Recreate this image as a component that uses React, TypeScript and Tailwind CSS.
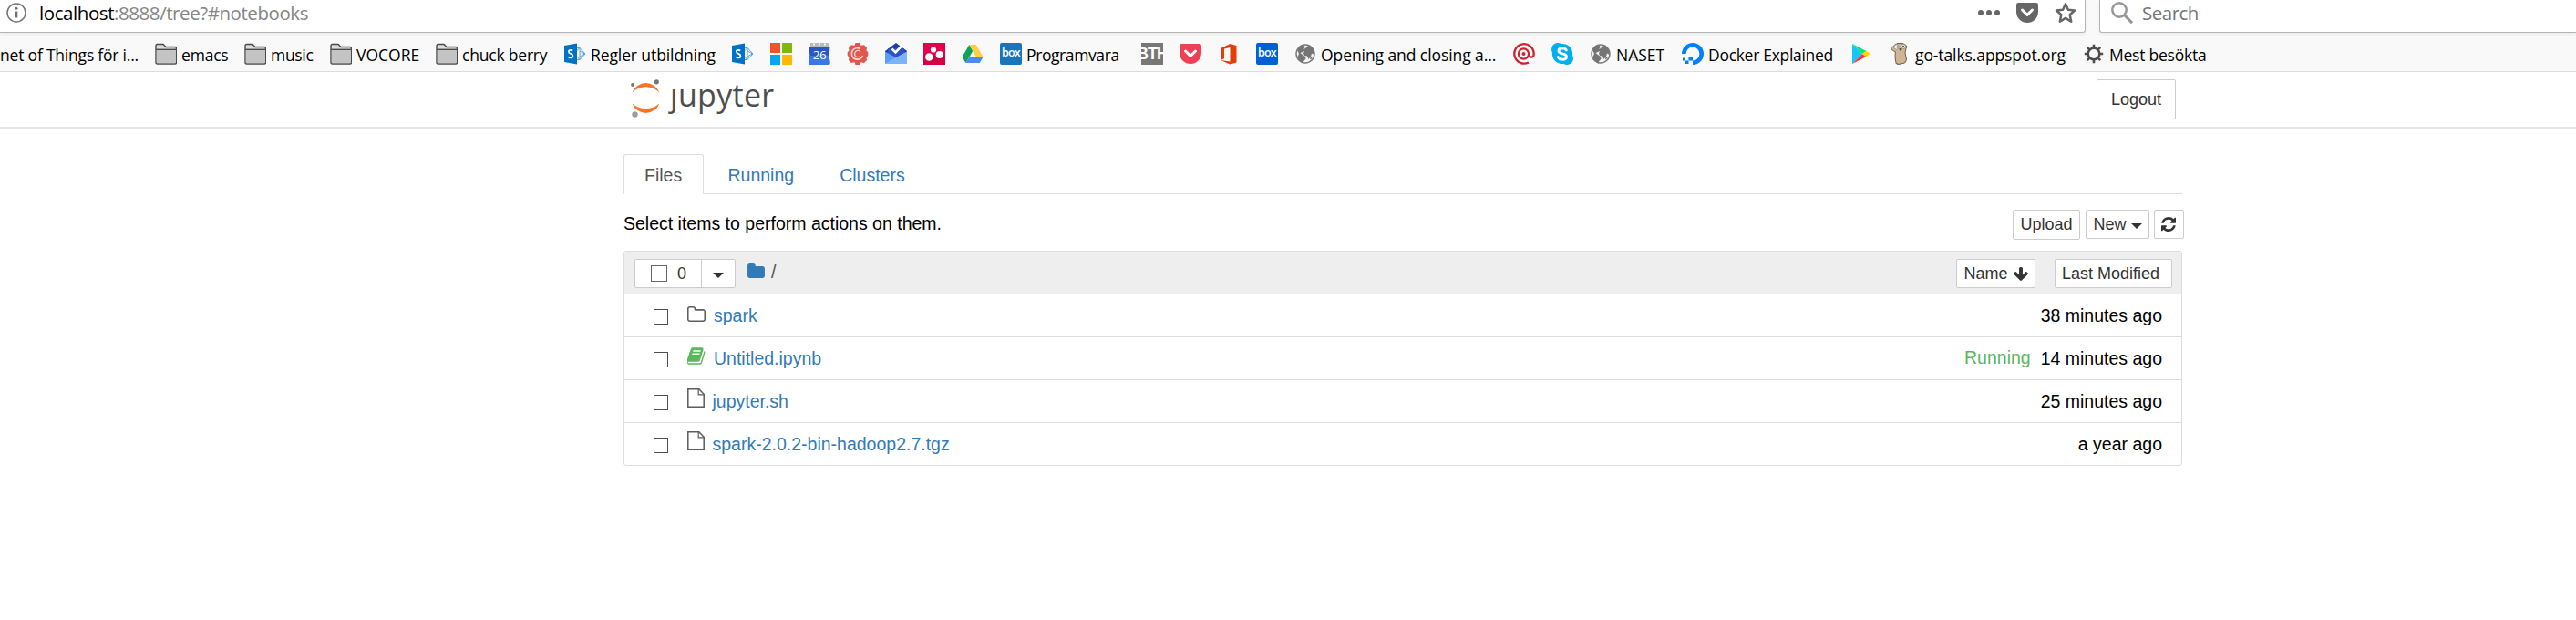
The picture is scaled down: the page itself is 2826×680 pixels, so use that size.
import type { ReactNode } from "react";

const FolderMark = () => (
  <svg viewBox="0 0 24 24" className="size-6">
    <path d="M1 22V3q0-1.500 1.500-1.500H9l3 3h10Q23.500 4.500 23.500 6v15.500q0 1.500-1.500 1.500H2.500Q1 23 1 21.500Z" fill="#dcdcdc" stroke="#4a4a4a" strokeWidth="1.400" />
    <path d="M1.800 8h21v13.500q0 .8-.8.8H2.600q-.8 0-.8-.8Z" fill="#c4c4c4" />
    <path d="M1 7.300h22.500" stroke="#4a4a4a" strokeWidth="1.400" />
  </svg>
);

const SharepointMark = () => (
  <svg viewBox="0 0 24 24" className="size-6">
    <path d="M13 5.500h4l6 6.500-6 6.500h-4M13 9.500l4-4v13l-4-4M17 9l5.500 3L17 15" fill="none" stroke="#5aa5dd" strokeWidth="1" />
    <path d="M0 3L14 .5v23L0 21Z" fill="#0072c6" />
    <path d="M9.200 8.600Q8 7.800 6.800 7.900q-1.900.1-1.900 1.800 0 1.400 2.200 2.100 2.300.8 2.300 2.400 0 2-2.300 2.100-1.400.1-2.600-.7" fill="none" stroke="#fff" strokeWidth="1.800" />
  </svg>
);

const MicrosoftMark = () => (
  <svg viewBox="0 0 24 24" className="size-6">
    <path d="M0 0h11v11H0z" fill="#f35325" />
    <path d="M13 0h11v11H13z" fill="#7fba00" />
    <path d="M0 13h11v11H0z" fill="#05a6f0" />
    <path d="M13 13h11v11H13z" fill="#ffb900" />
  </svg>
);

const CalendarMark = () => (
  <div className="relative size-6">
    <svg viewBox="0 0 24 24" className="size-6">
      <path d="M2 0h20v5H2z" fill="#b9b9b9" />
      <path d="M5 1.500h2M11 1.500h2M17 1.500h2" stroke="#f4f4f4" strokeWidth="1.800" />
      <path d="M.5 4h23l-.8 10 .8 8q0 2-1.500 2H2Q.5 24 .5 22l.8-8Z" fill="#2a56c6" />
      <path d="M1.300 14h21.400l.8 8q0 2-1.500 2H2Q.5 24 .5 22Z" fill="#3b78e7" />
    </svg>
    <span className="absolute inset-x-0 top-[5px] text-center font-['Open_Sans',sans-serif] text-[13.5px] leading-[17px] tracking-[-0.5px] text-white">26</span>
  </div>
);

const CogMark = () => (
  <svg viewBox="0 0 24 24" className="size-6">
    <path d="M9.500 0h5l1 2.800 3.500-.6 3 3-.5 3.500L23.300 10v4l-1.800 1.400.5 3.500-3 3-3.500-.6-1 2.700h-5l-1-2.700-3.500.6-3-3 .5-3.500L.7 14v-4l1.800-1.300L2 5.200l3-3 3.500.6Z" fill="#e2574c" />
    <path d="M15 6.600A6.300 6.300 0 1 0 17.500 14" fill="none" stroke="#f7d4d0" strokeWidth="1.700" />
    <path d="M15 9.800A3.600 3.600 0 1 0 14.500 14.800" fill="none" stroke="#f7d4d0" strokeWidth="1.200" />
  </svg>
);

const InboxMark = () => (
  <svg viewBox="0 0 24 24" className="size-6">
    <path d="M0 9L12 0l12 9v5H0Z" fill="#1f3fa8" />
    <path d="M3 6h18v10H3Z" fill="#2b50c8" />
    <path d="M7.500 6.500l4 4 7-7.500" fill="none" stroke="#fff" strokeWidth="2.600" />
    <path d="M0 9.500l12 6.500 12-6.500V22q0 1-1 1H1q-1 0-1-1Z" fill="#5a9cf8" />
    <path d="M0 22.500L24 9.500V22q0 1-1 1H1Z" fill="#7cb4fb" />
  </svg>
);

const DotsMark = () => (
  <svg viewBox="0 0 24 24" className="size-6">
    <path d="M0 0h24v24H0z" fill="#e5004f" />
    <path d="M0 14h24v10H0z" fill="#c4003f" fillOpacity=".6" />
    <g fill="#fff">
      <circle cx="11" cy="7.500" r="3.100" />
      <circle cx="6.300" cy="15.500" r="4.300" />
      <circle cx="17.700" cy="13" r="4" />
    </g>
  </svg>
);

const DriveMark = () => (
  <svg viewBox="0 0 24 24" className="size-6">
    <path d="M8.300 2L.5 15.500l4 6.500 8-13.500Z" fill="#11a15e" />
    <path d="M8.300 2h7.600l7.700 13.500h-7.900Z" fill="#ffcf48" />
    <path d="M8.300 15.500h15.300l-3.800 6.500H4.500Z" fill="#4f88ef" />
  </svg>
);

const BoxMark = ({ className }: { className: string }) => (
  <div className={`flex size-6 items-center justify-center rounded-[2px] pb-px font-['Open_Sans',sans-serif] text-[12.5px] leading-none font-semibold tracking-[-0.8px] text-white ${className}`}>
    <span>box</span>
  </div>
);

const BthMark = () => (
  <div className="flex size-6 items-center justify-center overflow-hidden bg-[#777]">
    <span className="font-['Liberation_Sans',sans-serif] text-[18px] leading-6 font-bold tracking-[-1px] text-white">BTH</span>
  </div>
);

const PocketShape = ({ fill, className }: { fill: string; className: string }) => (
  <svg viewBox="0 0 24 22" className={className}>
    <path d="M2.200 0h19.600Q24 0 24 2.200V10a12 12 0 0 1-24 0V2.200Q0 0 2.200 0Z" fill={fill} />
    <path d="M6.500 8l5.500 5.300L17.500 8" fill="none" stroke="#fff" strokeWidth="3" strokeLinecap="round" strokeLinejoin="round" />
  </svg>
);

const OfficeMark = () => (
  <svg viewBox="0 0 24 24" className="size-6">
    <path d="M3 6l10.500-5L20.500 3v18.500l-7 2L3 19l10.500 1.500V5L7 6.600v10.600L3 19Z" fill="#e43d05" />
  </svg>
);

const GlobeMark = () => (
  <svg viewBox="0 0 24 24" className="size-6">
    <circle cx="12" cy="12" r="10" fill="#f4f4f4" stroke="#757575" strokeWidth="1.400" />
    <path d="M3 8q3-5 7-5.500l2 2-2 2.500 2-1 3-3q4 1 6 5l.5 5-2.500-1.500-1 3.500-2.500 3-1.500-3.500-3-.5-1-2.500 1-2.500-2 1-2.500 1 2.500 2 3 2 .5 2.500-2.500 3v2.500Q4 20 3.500 15L5 12Z" fill="#757575" />
    <path d="M18 15l2 .5-2 3-1-1Z" fill="#757575" />
  </svg>
);

const AtMark = () => (
  <svg viewBox="0 0 24 24" className="size-6" fill="none" stroke="#cf2030">
    <circle cx="11.500" cy="12" r="2" fill="#cf2030" stroke="none" />
    <circle cx="11.500" cy="12" r="5.600" strokeWidth="2.200" />
    <path d="M17 12q0 3.700 3 3.700 2.700 0 2.700-3.700A10.700 10.700 0 1 0 17 21.400" strokeWidth="2.300" />
  </svg>
);

const SkypeMark = () => (
  <svg viewBox="0 0 24 24" className="size-6">
    <path d="M7 0q2 0 3.500 1A11 11 0 0 1 23 13.500Q24 15 24 17a7 7 0 0 1-10.500 6A11 11 0 0 1 1 10.500Q0 9 0 7a7 7 0 0 1 7-7Z" fill="#00aff0" />
    <path d="M16.300 8Q15 5.800 12 5.800q-4 .2-4 3 0 2.200 4 3 4.500.8 4.500 3.400 0 3-4.500 3-3.500 0-4.700-2.600" fill="none" stroke="#fff" strokeWidth="2.900" strokeLinecap="round" />
  </svg>
);

const OceanMark = () => (
  <svg viewBox="0 0 24 24" className="size-6">
    <path d="M12 21.700a9.700 9.700 0 1 0-9.700-9.700" fill="none" stroke="#0080ff" strokeWidth="4.600" />
    <path d="M7.500 15H12v4.500H7.500zM4 19.500h3.500V23H4zM1 16.500h3v3H1z" fill="#0080ff" />
  </svg>
);

const PlayMark = () => (
  <svg viewBox="0 0 24 24" className="size-6">
    <path d="M2 1v22l11-11Z" fill="#12c8f5" />
    <path d="M2 1l15.500 8L13 12Z" fill="#10e07a" />
    <path d="M2 23l15.500-8L13 12Z" fill="#fb3348" />
    <path d="M13 12l4-3.500 5 3.500-5 3.500Z" fill="#ffd400" />
  </svg>
);

const GopherMark = () => (
  <svg viewBox="0 0 24 24" className="size-6">
    <path d="M5 4Q8 0 12 .5q5-.5 7 2.500 1.500 1 0 3l-1 5 1.500 7q-1 5-5 4.500-4 2-6.500-.5-1.500-7-.5-12Q3 8 2.500 5.500 3 4 5 4Z" fill="#d0b594" stroke="#77695a" strokeWidth="1.100" />
    <circle cx="8.500" cy="4.500" r="2.700" fill="#f2f2f2" stroke="#8b8278" strokeWidth=".8" />
    <circle cx="16" cy="3.800" r="2.500" fill="#f2f2f2" stroke="#8b8278" strokeWidth=".8" />
    <circle cx="9.500" cy="4.500" r=".9" fill="#333" />
    <circle cx="16" cy="3.600" r=".9" fill="#333" />
    <path d="M11.500 6h3l-.5 2.500h-2Z" fill="#5b5048" />
  </svg>
);

const GearMark = () => (
  <svg viewBox="0 0 24 24" className="size-6" stroke="#4c4c4c" fill="none">
    <circle cx="12" cy="12" r="6.300" strokeWidth="2.600" />
    <path d="M12 1.800v4M12 18.200v4M1.800 12h4M18.200 12h4M4.800 4.800l2.800 2.800M16.400 16.400l2.800 2.800M4.800 19.200l2.800-2.800M16.400 7.600l2.800-2.800" strokeWidth="2.600" />
  </svg>
);

type Bookmark = { icon: ReactNode; label?: string; width: string; tracking?: string };

const bookmarks: Bookmark[] = [
  { icon: <FolderMark />, label: "emacs", width: "w-[98px]", tracking: "tracking-[-0.2px]" },
  { icon: <FolderMark />, label: "music", width: "w-[94px]", tracking: "tracking-[-0.3px]" },
  { icon: <FolderMark />, label: "VOCORE", width: "w-[116px]" },
  { icon: <FolderMark />, label: "chuck berry", width: "w-[141px]", tracking: "tracking-[-0.2px]" },
  { icon: <SharepointMark />, label: "Regler utbildning", width: "w-[184px]", tracking: "tracking-[-0.1px]" },
  { icon: <SharepointMark />, width: "w-[42px]" },
  { icon: <MicrosoftMark />, width: "w-[42px]" },
  { icon: <CalendarMark />, width: "w-[42px]" },
  { icon: <CogMark />, width: "w-[42px]" },
  { icon: <InboxMark />, width: "w-[42px]" },
  { icon: <DotsMark />, width: "w-[42px]" },
  { icon: <DriveMark />, width: "w-[42px]" },
  { icon: <BoxMark className="bg-[#1a74ba]" />, label: "Programvara", width: "w-[155px]", tracking: "tracking-[-0.4px]" },
  { icon: <BthMark />, width: "w-[42px]" },
  { icon: <PocketShape fill="#ee4056" className="h-[22px] w-6" />, width: "w-[42px]" },
  { icon: <OfficeMark />, width: "w-[42px]" },
  { icon: <BoxMark className="bg-[#0061d5]" />, width: "w-[42px]" },
  { icon: <GlobeMark />, label: "Opening and closing a...", width: "w-[240px]", tracking: "tracking-[-0.08px]" },
  { icon: <AtMark />, width: "w-[42px]" },
  { icon: <SkypeMark />, width: "w-[42px]" },
  { icon: <GlobeMark />, label: "NASET", width: "w-[101px]" },
  { icon: <OceanMark />, label: "Docker Explained", width: "w-[185px]", tracking: "tracking-[-0.3px]" },
  { icon: <PlayMark />, width: "w-[42px]" },
  { icon: <GopherMark />, label: "go-talks.appspot.org", width: "w-[213px]", tracking: "tracking-[-0.1px]" },
  { icon: <GearMark />, label: "Mest besökta", width: "w-[150px]", tracking: "tracking-[-0.23px]" },
];

function BrowserChrome() {
  return (
    <header className="h-[79px] border-b border-[#dcdcdc] bg-[#f9f9f9] font-['Open_Sans',sans-serif]">
      <div className="flex h-9 gap-[15px]">
        <div className="flex w-[2288px] items-start rounded-br-[3px] border-r border-b border-[#b5b5b5] bg-white shadow-[0_2px_4px_rgba(0,0,0,0.06)]">
          <svg viewBox="0 0 22 22" className="mt-[3px] ml-[7px] size-[22px]">
            <circle cx="11" cy="11" r="10" fill="none" stroke="#737373" strokeWidth="1.500" />
            <path d="M11 9.500v7" stroke="#737373" strokeWidth="2.600" />
            <circle cx="11" cy="6.200" r="1.500" fill="#737373" />
          </svg>
          <span className="ml-[14px] grow text-[20.5px] leading-[29px] tracking-[-0.43px] whitespace-nowrap text-[#858585]">
            <span className="text-black">localhost</span>:8888/tree?#notebooks
          </span>
          <svg viewBox="0 0 24 6" className="mt-[11px] mr-[18px] h-[6px] w-6" fill="#666">
            <circle cx="3" cy="3" r="3" />
            <circle cx="12" cy="3" r="3" />
            <circle cx="21" cy="3" r="3" />
          </svg>
          <PocketShape fill="#666" className="mt-[3px] mr-[18px] h-[22px] w-6" />
          <svg viewBox="0 0 24 24" className="mt-[2px] mr-[9px] size-6">
            <path d="M12 2.200l2.900 6.500 7.100.8-5.300 4.800 1.500 7.400L12 17.900l-6.200 3.800 1.500-7.400L2 9.500l7.100-.8Z" fill="none" stroke="#666" strokeWidth="2.500" strokeLinejoin="round" />
          </svg>
        </div>
        <div className="flex grow items-start rounded-bl-[3px] border-b border-l border-[#b5b5b5] bg-white shadow-[0_2px_4px_rgba(0,0,0,0.06)]">
          <svg viewBox="0 0 24 24" className="mt-[2px] ml-[12px] size-6" fill="none" stroke="#979797">
            <circle cx="9" cy="9" r="7.700" strokeWidth="2.500" />
            <path d="M14.500 14.500l8.500 8.700" strokeWidth="3" />
          </svg>
          <span className="ml-[10px] text-[20.5px] leading-[29px] tracking-[-0.5px] text-[#757575]">Search</span>
        </div>
      </div>
      <nav className="flex h-[42px] items-start overflow-hidden pt-[11px] text-[17.5px] leading-[26px] whitespace-nowrap text-black">
        <div className="flex w-[170px] shrink-0 justify-end pr-[18px] tracking-[-0.21px]">
          <span>net of Things för i...</span>
        </div>
        {bookmarks.map((b, i) => (
          <div key={i} className={`flex shrink-0 gap-[5px] ${b.width}`}>
            <div className="flex size-6 shrink-0 items-center justify-center">{b.icon}</div>
            {b.label && <span className={b.tracking}>{b.label}</span>}
          </div>
        ))}
      </nav>
    </header>
  );
}

function JupyterLogo() {
  return (
    <div className="flex items-start">
      <svg viewBox="0 0 32 43" className="h-[43px] w-8">
        <path d="M1.500 14.500a16 16 0 0 1 30 0Q25 8.300 16.500 8.300T1.500 14.500Z" fill="#f37726" />
        <path d="M1.500 26.500a16 16 0 0 0 30 0Q25 32 16.500 32T1.500 26.500Z" fill="#f37726" />
        <circle cx="28.300" cy="2.800" r="2.600" fill="#767677" />
        <circle cx="2" cy="6" r="1.900" fill="#767677" />
        <circle cx="4.500" cy="38.500" r="3.200" fill="#9e9e9e" />
      </svg>
      <span className="ml-[11px] pt-[2px] font-['Open_Sans',sans-serif] text-[34px] leading-[30px] tracking-[0.3px] text-[#4e4e4e]">
        <span className="inline-block [clip-path:inset(8px_0_-12px_-12px)]">j</span>upyter
      </span>
    </div>
  );
}

const Caret = () => (
  <svg viewBox="0 0 12 6" className="h-[6px] w-3" fill="#333">
    <path d="M0 0h12L6 6Z" />
  </svg>
);

const ClosedFolder = () => (
  <svg viewBox="64 128 1664 1408" className="h-4 w-[19px]" fill="#337ab7">
    <path d="M1728 608v704q0 92-66 158t-158 66h-1216q-92 0-158-66t-66-158v-960q0-92 66-158t158-66h320q92 0 158 66t66 158v32h672q92 0 158 66t66 158z" />
  </svg>
);

const OpenFolder = () => (
  <svg viewBox="64 128 1664 1408" className="mt-[13px] h-[17px] w-5" fill="#5e5e5e">
    <path d="M1600 1312v-704q0-40-28-68t-68-28h-704q-40 0-68-28t-28-68v-64q0-40-28-68t-68-28h-320q-40 0-68 28t-28 68v960q0 40 28 68t68 28h1216q40 0 68-28t28-68zm128-704v704q0 92-66 158t-158 66h-1216q-92 0-158-66t-66-158v-960q0-92 66-158t158-66h320q92 0 158 66t66 158v32h672q92 0 158 66t66 158z" />
  </svg>
);

const Notebook = () => (
  <svg viewBox="64 128 1640 1536" className="mt-[11px] h-[19px] w-5" fill="#5cb85c">
    <path d="M1639 478q40 57 18 129l-275 906q-19 64-76.500 107.500t-122.500 43.500h-923q-77 0-148.500-53.500t-99.500-131.500q-24-67-2-127 0-4 3-27t4-37q1-8-3-21.500t-3-19.500q2-11 8-21t16.500-23.500 16.500-23.500q23-38 45-91.500t30-91.500q3-10 .5-30t-.5-28q3-11 17-28t17-23q21-36 42-92t25-90q1-9-2.500-32t.5-28q4-13 22-30.500t22-22.500q19-26 42.500-84.500t27.500-96.500q1-8-3-25.500t-2-26.500q2-8 9-18t18-23 17-21q8-12 16.500-30.500t15-35 16-36 19.500-32 26.500-23.500 36-11.500 47.500 5.500l-1 3q38-9 51-9h761q74 0 114 56t18 130l-274 906q-36 119-71.500 153.500t-128.500 34.500h-869q-27 0-38 15-11 16-1 43 24 70 144 70h923q29 0 56-15.500t35-41.500l300-987q7-22 5-57 38 15 59 43zm-1064 2q-4 13 2 22.500t20 9.500h608q13 0 25.500-9.500t16.500-22.500l21-64q4-13-2-22.500t-20-9.500h-608q-13 0-25.500 9.500t-16.500 22.500zm-83 256q-4 13 2 22.500t20 9.500h608q13 0 25.500-9.500t16.500-22.500l21-64q4-13-2-22.500t-20-9.500h-608q-13 0-25.500 9.500t-16.500 22.500z" />
  </svg>
);

const PlainFile = () => (
  <svg viewBox="0 0 19 21" className="mt-[9px] mr-[1px] h-[21px] w-[19px]" fill="none" stroke="#5e5e5e" strokeWidth="1.500">
    <path d="M.8.8h12l5.400 5.400v14H.8Z" />
    <path d="M12.200.8v6h6" strokeWidth="1.200" />
  </svg>
);

const Refresh = () => (
  <svg viewBox="128 128 1536 1536" className="mr-px size-4" fill="#333">
    <path d="M1639 1056q0 5-1 7-64 268-268 434.500t-478 166.500q-146 0-282.500-55t-243.500-157l-129 129q-19 19-45 19t-45-19-19-45v-448q0-26 19-45t45-19h448q26 0 45 19t19 45-19 45l-137 137q71 66 161 102t187 36q134 0 250-65t186-179q11-17 53-117 8-23 30-23h192q13 0 22.500 9.500t9.500 22.500zm25-800v448q0 26-19 45t-45 19h-448q-26 0-45-19t-19-45 19-45l138-138q-148-137-349-137-134 0-250 65t-186 179q-11 17-53 117-8 23-30 23h-199q-13 0-22.500-9.500t-9.500-22.500v-7q65-268 270-434.500t480-166.500q146 0 284 55.500t245 156.500l130-129q19-19 45-19t45 19 19 45z" />
  </svg>
);

const ArrowDown = () => (
  <svg viewBox="117 128 1558 1484" className="h-[15px] w-[16px]" fill="#333">
    <path d="M1675 832q0 53-37 90l-651 652q-39 37-91 37-53 0-90-37l-651-652q-38-36-38-90 0-53 38-91l74-75q39-37 91-37 53 0 90 37l294 294v-704q0-52 38-90t90-38h128q52 0 90 38t38 90v704l294-294q37-37 90-37 52 0 91 37l75 75q37 39 37 91z" />
  </svg>
);

const files = [
  { icon: <OpenFolder />, name: "spark", gap: "ml-[9px]", time: "38 minutes ago", running: false },
  { icon: <Notebook />, name: "Untitled.ipynb", gap: "ml-[9px]", time: "14 minutes ago", running: true },
  { icon: <PlainFile />, name: "jupyter.sh", gap: "ml-[7.5px]", time: "25 minutes ago", running: false },
  { icon: <PlainFile />, name: "spark-2.0.2-bin-hadoop2.7.tgz", gap: "ml-[7.5px]", time: "a year ago", running: false },
];

export default function App() {
  return (
    <div className="h-[680px] w-[2826px] overflow-hidden bg-white font-['Liberation_Sans',Arial,sans-serif] text-[19.5px] text-black">
      <BrowserChrome />
      <div className="h-[62px] border-b-2 border-[#e7e7e7]">
        <div className="ml-[692px] flex w-[1695px] items-start justify-between pt-[8px]">
          <JupyterLogo />
          <button className="h-11 w-[87px] rounded-[2px] border border-[#ccc] bg-white text-[18px] text-[#333]">Logout</button>
        </div>
      </div>

      <main className="ml-[684px] w-[1710px] pt-[28px]">
        <div className="flex h-11 border-b border-[#ddd] leading-[45px] text-[#337ab7]">
          <div className="h-11 w-[88px] rounded-t-[3px] border border-b-0 border-[#ddd] bg-white pl-[22px] text-[#555]">Files</div>
          <div className="ml-[26.5px] pt-px">Running</div>
          <div className="ml-[50px] pt-px">Clusters</div>
        </div>

        <div className="flex h-[62px] items-start justify-between">
          <p className="mt-[17px] leading-[30px]">Select items to perform actions on them.</p>
          <div className="mt-[17px] mr-[-2px] flex text-[18px] text-[#333]">
            <button className="h-[33px] w-[74px] rounded-[2px] border border-[#ccc] bg-white">Upload</button>
            <button className="ml-[6px] flex h-8 w-[70px] items-center justify-center gap-[5px] rounded-[2px] border border-[#ccc] bg-white pt-px">
              New <span className="pt-[3px]"><Caret /></span>
            </button>
            <button className="ml-[5px] flex h-8 w-[33px] items-center justify-center rounded-[2px] border border-[#ccc] bg-white">
              <Refresh />
            </button>
          </div>
        </div>

        <section className="rounded-[3px] border border-[#ddd]">
          <div className="flex h-[46px] items-start bg-[#eee] pt-2 text-[18px] text-[#333]">
            <div className="ml-[11px] flex h-8 w-[111px] rounded-[2px] border border-[#ccc] bg-white">
              <div className="flex w-[73px] items-center border-r border-[#ccc] pl-[17px]">
                <span className="size-[18px] border border-[#666] bg-white" />
                <span className="ml-[11px]">0</span>
              </div>
              <div className="flex grow items-center justify-center pt-[3px]">
                <Caret />
              </div>
            </div>
            <div className="ml-[13px] flex items-start">
              <div className="mt-[5px]"><ClosedFolder /></div>
              <span className="ml-[7px] text-[19.5px] leading-[28px] text-[#555]">/</span>
            </div>
            <button className="ml-auto flex h-8 w-[87px] items-center justify-center gap-[6px] rounded-[2px] border border-[#ccc] bg-white">
              Name <ArrowDown />
            </button>
            <button className="mr-[10px] ml-[21px] h-8 w-[129px] rounded-[2px] border border-[#ccc] bg-white pl-[7px] text-left">Last Modified</button>
          </div>
          {files.map((f) => (
            <div key={f.name} className="flex h-[47px] items-start border-t border-[#ddd] leading-[46px]">
              <span className="mt-[16px] ml-[32px] h-[17px] w-4 border border-[#4f4f4f] bg-white" />
              <div className="ml-[21px]">{f.icon}</div>
              <span className={`grow text-[#337ab7] ${f.gap}`}>{f.name}</span>
              {f.running && <span className="mr-[11px] leading-[44px] text-[#5cb85c]">Running</span>}
              <span className="mr-[21px]">{f.time}</span>
            </div>
          ))}
        </section>
      </main>
    </div>
  );
}
